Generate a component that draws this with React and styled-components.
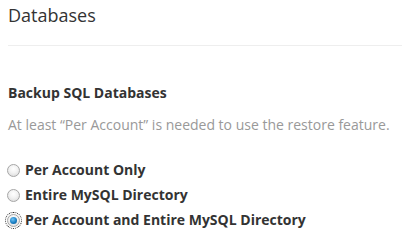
import React from "react";
import styled, { createGlobalStyle } from "styled-components";

const Global = createGlobalStyle`
  html, body { margin: 0; padding: 0; background: #fff; }
  body { font-family: "Open Sans", "Liberation Sans", sans-serif; color: #333; }
`;

const Page = styled.div`
  padding: 0 0 0 8px;
  width: 394px;
`;

const Title = styled.h1`
  margin: 0;
  padding-top: 2px;
  font-size: 18px;
  font-weight: 400;
  line-height: 26px;
  color: #333;
`;

const Divider = styled.hr`
  margin: 17px 0 0 0;
  border: 0;
  border-top: 1px solid #eee;
  height: 0;
`;

const Section = styled.section`
  padding-top: 37px;
`;

const Heading = styled.h2`
  margin: 0;
  font-size: 14px;
  font-weight: 700;
  line-height: 20px;
  color: #333;
`;

const Help = styled.p`
  margin: 12px 0 0 0;
  font-size: 14px;
  line-height: 20px;
  color: #999;
`;

const Options = styled.div`
  margin-top: 25px;
  display: flex;
  flex-direction: column;
  gap: 5px;
`;

const Option = styled.label`
  display: flex;
  align-items: center;
  gap: 5px;
  font-size: 14px;
  font-weight: 700;
  line-height: 20px;
  color: #333;
`;

const Radio = styled.span`
  box-sizing: border-box;
  width: 13px;
  height: 13px;
  margin-left: -1px;
  border-radius: 50%;
  border: 1px solid #a6a6a6;
  background: radial-gradient(circle at 50% 35%, #ffffff 0%, #f2f2f2 45%, #d6d6d6 100%);
  display: flex;
  align-items: center;
  justify-content: center;
  flex: none;
  outline: ${(p) => (p.$focused ? "1px dotted #222" : "none")};
  outline-offset: 1px;
  &::after {
    content: "";
    display: ${(p) => (p.$checked ? "block" : "none")};
    width: 7px;
    height: 7px;
    border-radius: 50%;
    background: radial-gradient(circle at 40% 35%, #6ec3f5 0%, #1a7fc4 55%, #0b4f86 100%);
  }
`;

const options = [
  { label: "Per Account Only", checked: false },
  { label: "Entire MySQL Directory", checked: false },
  { label: "Per Account and Entire MySQL Directory", checked: true },
];

export default function App() {
  return (
    <>
      <Global />
      <Page>
        <Title>Databases</Title>
        <Divider />
        <Section>
          <Heading>Backup SQL Databases</Heading>
          <Help>At least “Per Account” is needed to use the restore feature.</Help>
          <Options>
            {options.map((o) => (
              <Option key={o.label}>
                <Radio $checked={o.checked} $focused={o.checked} />
                {o.label}
              </Option>
            ))}
          </Options>
        </Section>
      </Page>
    </>
  );
}
